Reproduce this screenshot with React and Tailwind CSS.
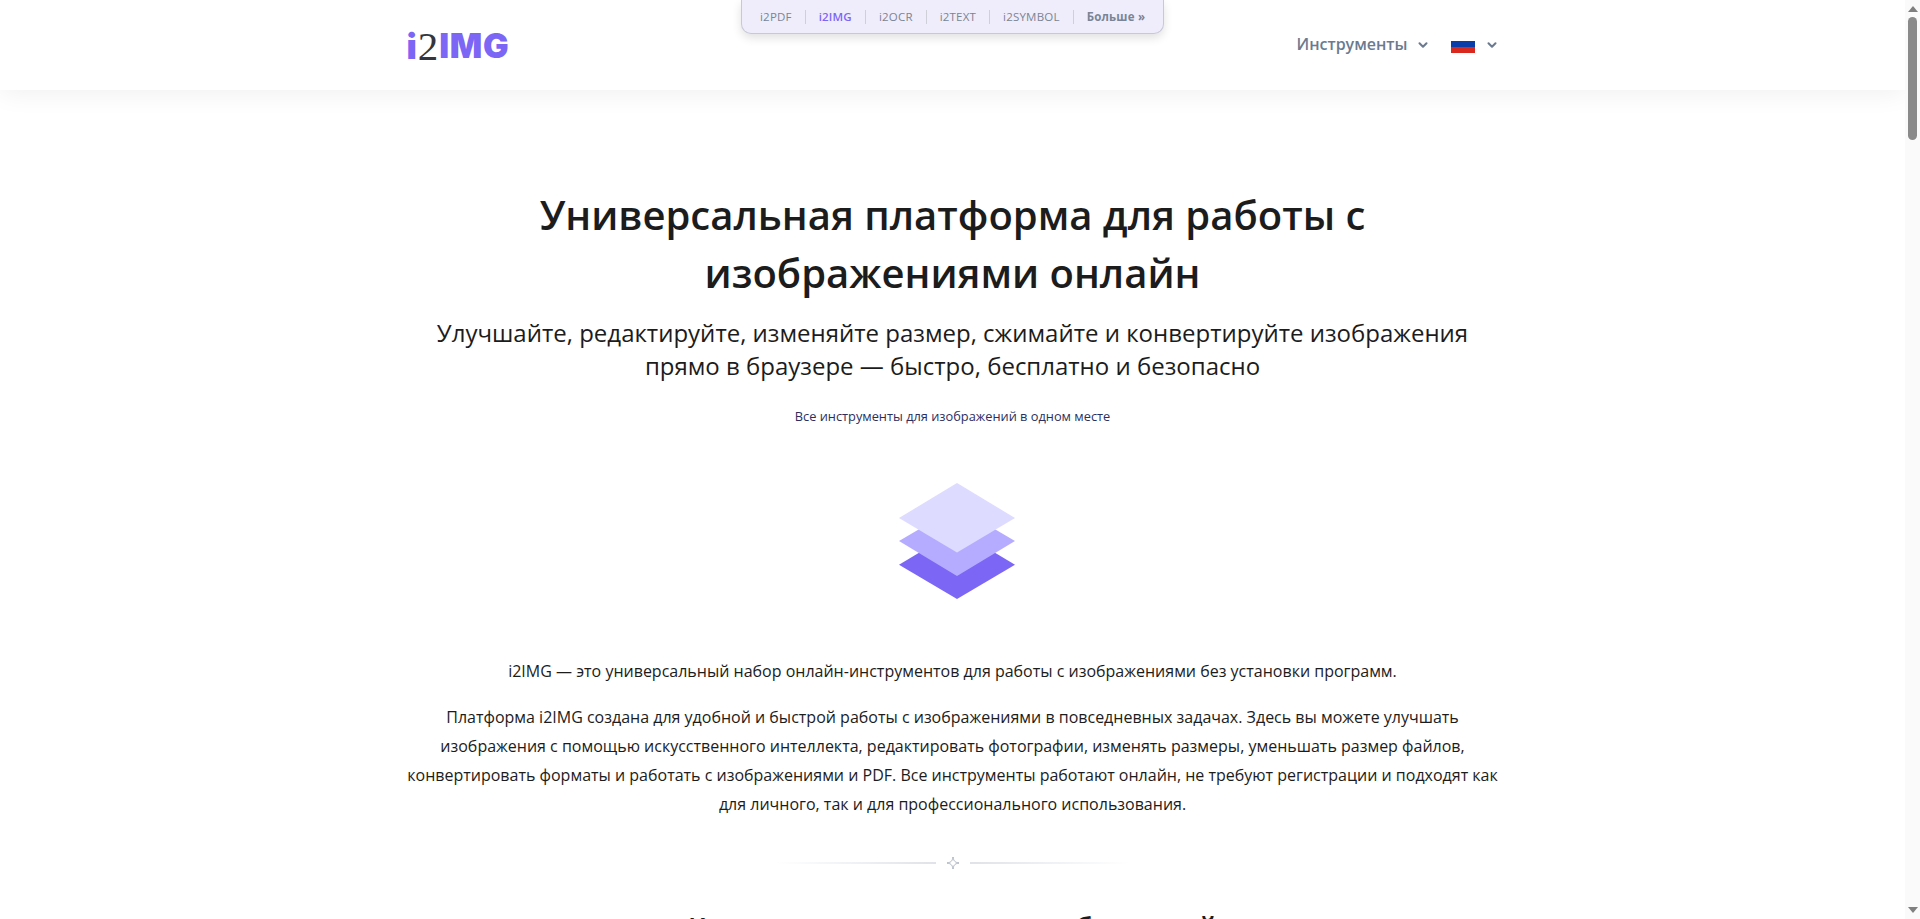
import { ChevronDown } from 'lucide-react';

const sans = { fontFamily: '"Open Sans", sans-serif' };

const topLinks = ['i2PDF', 'i2IMG', 'i2OCR', 'i2TEXT', 'i2SYMBOL'];

const TopBar = () => (
    <div className="absolute left-[741px] top-0 z-20 flex h-[34px] w-[423px] items-center rounded-b-[10px] border border-t-0 border-[#c9c9d6] bg-[#efedfc] pl-[18px] shadow-[0_4px_10px_rgba(0,0,0,0.12)]">
        {topLinks.map((name) => (
            <div key={name} className="flex items-center">
                <span className={`text-[11.5px] leading-none tracking-[0.2px] ${name === 'i2IMG' ? 'font-semibold text-[#7c66f5]' : 'text-[#7a8494]'}`}>{name}</span>
                <span className="mx-[13px] h-[14px] w-px bg-[#cfcfd8]" />
            </div>
        ))}
        <span className="text-[11.5px] font-bold leading-none tracking-[0.2px] text-[#7a8494]">Больше »</span>
    </div>
);

const Logo = () => (
    <div className="-ml-[1px] mt-[2px] flex items-center leading-none select-none">
        <span className="text-[35px] font-black text-[#7c66f5]" style={{ fontFamily: 'Inter, sans-serif' }}>i</span>
        <span className="mx-[1px] text-[41px] text-[#33363f]" style={{ fontFamily: '"Liberation Serif", serif' }}>2</span>
        <span className="text-[34px] font-black tracking-[0.6px] text-[#7c66f5]" style={{ fontFamily: 'Inter, sans-serif' }}>IMG</span>
    </div>
);

const Flag = () => (
    <svg width="24" height="12" viewBox="0 0 24 12" className="mt-[3px] block">
        <rect width="24" height="6" fill="#0a3da8" />
        <rect y="6" width="24" height="6" fill="#d9281e" />
    </svg>
);

const Header = () => (
    <header className="relative z-10 flex h-[90px] justify-center bg-white shadow-[0_4px_24px_rgba(15,23,42,0.06)]">
        <div className="flex w-[1090px] items-center justify-between">
            <Logo />
            <div className="-mr-[1px] flex items-center">
                <span className="mb-[2px] text-[16px] font-semibold text-[#6b7a90]">Инструменты</span>
                <ChevronDown size={14} strokeWidth={3.5} className="ml-[8px] text-[#6b7a90]" />
                <span className="ml-[21px]"><Flag /></span>
                <ChevronDown size={14} strokeWidth={3.5} className="ml-[10px] text-[#6b7a90]" />
            </div>
        </div>
    </header>
);

const Layers = () => (
    <svg width="118" height="118" viewBox="0 0 118 118" className="block">
        <polygon points="59,48 117,82.7 59,117 1,82.7" fill="#7c66f5" />
        <polygon points="59,25 117,59 59,94 1,59" fill="#b6acff" />
        <polygon points="59,1 117,36 59,70.5 1,36" fill="#dddbff" />
    </svg>
);

const Divider = () => (
    <div className="flex items-center justify-center">
        <div className="h-[2px] w-[160px] bg-gradient-to-r from-transparent to-[#dfe2e8]" />
        <svg width="14" height="14" viewBox="0 0 14 14" className="mx-[10px]">
            <path d="M7 1 C7.6 5 9 6.4 13 7 C9 7.6 7.6 9 7 13 C6.4 9 5 7.6 1 7 C5 6.4 6.4 5 7 1 Z" fill="none" stroke="#aab2bf" strokeWidth="1" />
        </svg>
        <div className="h-[2px] w-[160px] bg-gradient-to-l from-transparent to-[#dfe2e8]" />
    </div>
);

// fake browser scrollbar, the page itself is clipped to the window
const Scrollbar = () => (
    <div className="flex w-[15px] shrink-0 flex-col items-center bg-[#fafafa]">
        <svg width="10" height="6" viewBox="0 0 10 6" className="mt-[6px]">
            <polygon points="5,0 10,6 0,6" fill="#7f7f7f" />
        </svg>
        <div className="mt-[5px] h-[123px] w-[9px] rounded-full bg-[#8a8a8a]" />
        <svg width="10" height="6" viewBox="0 0 10 6" className="mt-auto mb-[6px]">
            <polygon points="0,0 10,0 5,6" fill="#7f7f7f" />
        </svg>
    </div>
);

const App = () => {
    return (
        <div className="flex h-[919px] w-[1920px] overflow-hidden bg-white text-[#1c1c1c]" style={sans}>
            <div className="relative min-w-0 flex-1 overflow-hidden">
                <TopBar />
                <Header />
                <main className="mx-auto flex w-[1100px] flex-col items-center text-center">
                    <h1 className="mt-[96px] w-[900px] text-[40px] font-semibold leading-[58px]">
                        Универсальная платформа для работы с изображениями онлайн
                    </h1>
                    <p className="mt-[14px] w-[1050px] text-[24px] leading-[33px]">
                        Улучшайте, редактируйте, изменяйте размер, сжимайте и конвертируйте изображения прямо в браузере — быстро, бесплатно и безопасно
                    </p>
                    <p className="mt-[24px] text-[12.8px] leading-[20px] text-[#2c2f5e]">Все инструменты для изображений в одном месте</p>
                    <div className="ml-[9px] mt-[56px]"><Layers /></div>
                    <p className="mt-[59px] text-[16px] leading-[24px]">
                        i2IMG — это универсальный набор онлайн-инструментов для работы с изображениями без установки программ.
                    </p>
                    <p className="mt-[20px] text-[16px] leading-[29px]">
                        Платформа i2IMG создана для удобной и быстрой работы с изображениями в повседневных задачах. Здесь вы можете улучшать изображения с помощью искусственного интеллекта, редактировать фотографии, изменять размеры, уменьшать размер файлов, конвертировать форматы и работать с изображениями и PDF. Все инструменты работают онлайн, не требуют регистрации и подходят как для личного, так и для профессионального использования.
                    </p>
                    <div className="mt-[37px]"><Divider /></div>
                    <h2 className="mt-[37px] text-[27.2px] font-semibold leading-[40px]">Какие инструменты для изображений</h2>
                </main>
            </div>
            <Scrollbar />
        </div>
    );
};

export default App;
